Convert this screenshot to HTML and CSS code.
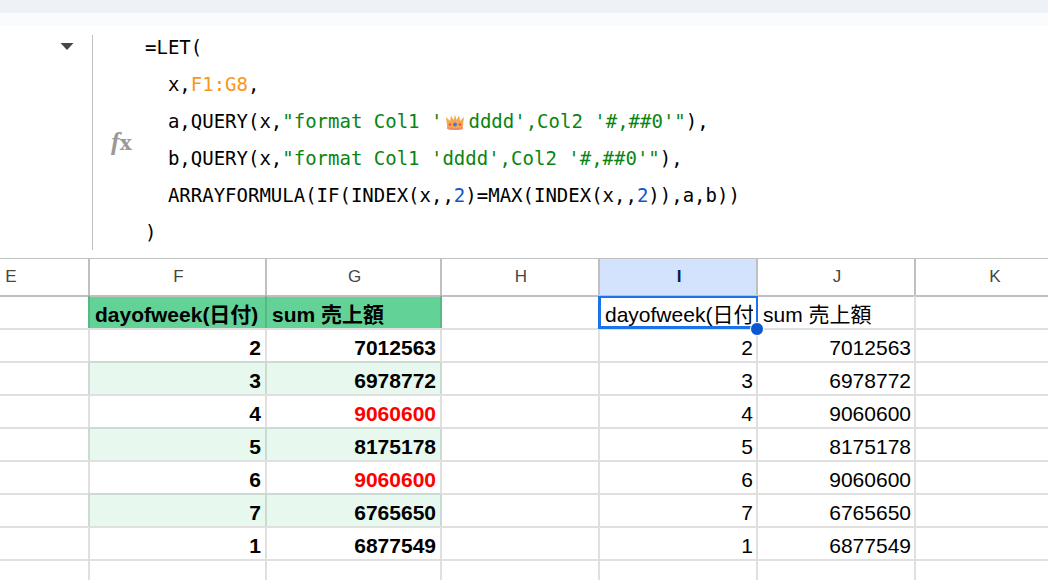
FILE: index.html
```
<!DOCTYPE html>
<html lang="ja">
<head>
  <meta charset="UTF-8">
  <meta name="viewport" content="width=device-width, initial-scale=1.0">
  <title>Spreadsheet</title>
  <link rel="stylesheet" href="styles.css">
</head>
<body>
  <div class="toolbar"></div>

  <div class="formula-bar">
    <div class="name-box">
      <button class="name-box-btn" type="button" aria-label="Name box">
        <svg width="14" height="7" viewBox="0 0 14 7"><path d="M0.500 0h13L7 7z" fill="#444746"/></svg>
      </button>
    </div>
    <div class="fx"><i>f</i>x</div>
    <pre class="formula">=LET(
  x,<span class="range">F1:G8</span>,
  a,QUERY(x,<span class="string">"format Col1 '<svg class="crown" width="20" height="18" viewBox="0 0 20 18">
<path d="M1 4L5 8 6 2.500 8.500 7 10 1.500 11.500 7 14 2.500 15 8 19 4 17.500 16Q10 18 2.500 16z" fill="#f5a850"/>
<path d="M3 8.500Q10 5.500 17 8.500L17.500 16Q10 18 2.500 16z" fill="#f5a850"/>
<path d="M2.200 14Q10 16 17.800 14L17.500 16Q10 18 2.500 16z" fill="#ef8a68"/>
<circle cx="10" cy="11.500" r="2" fill="#4a78d8"/>
<circle cx="5" cy="11.500" r="1.200" fill="#e0505a"/><circle cx="15" cy="11.500" r="1.200" fill="#e0505a"/>
</svg>dddd',Col2 '#,##0'"</span>),
  b,QUERY(x,<span class="string">"format Col1 'dddd',Col2 '#,##0'"</span>),
  ARRAYFORMULA(IF(INDEX(x,,<span class="number">2</span>)=MAX(INDEX(x,,<span class="number">2</span>)),a,b))
)</pre>
  </div>

  <div class="sheet">
    <table class="grid">
      <colgroup>
        <col class="col"><col class="col-f"><col class="col-g"><col class="col"><col class="col"><col class="col"><col>
      </colgroup>
      <thead>
        <tr><th>E</th><th>F</th><th>G</th><th>H</th><th class="active">I</th><th>J</th><th>K</th></tr>
      </thead>
      <tbody>
        <tr class="head">
          <td></td><td class="src">dayofweek(日付)</td><td class="src">sum 売上額</td><td class="edge"></td>
          <td class="selected"><div class="clip">dayofweek(日付)</div><span class="selection"></span><span class="handle"></span></td>
          <td>sum 売上額</td><td></td>
        </tr>
        <tr><td></td><td class="src">2</td><td class="src">7012563</td><td class="edge"></td><td>2</td><td>7012563</td><td></td></tr>
        <tr class="band"><td></td><td class="src">3</td><td class="src">6978772</td><td class="edge"></td><td>3</td><td>6978772</td><td></td></tr>
        <tr><td></td><td class="src">4</td><td class="src max">9060600</td><td class="edge"></td><td>4</td><td>9060600</td><td></td></tr>
        <tr class="band"><td></td><td class="src">5</td><td class="src">8175178</td><td class="edge"></td><td>5</td><td>8175178</td><td></td></tr>
        <tr><td></td><td class="src">6</td><td class="src max">9060600</td><td class="edge"></td><td>6</td><td>9060600</td><td></td></tr>
        <tr class="band"><td></td><td class="src">7</td><td class="src">6765650</td><td class="edge"></td><td>7</td><td>6765650</td><td></td></tr>
        <tr><td></td><td class="src">1</td><td class="src">6877549</td><td class="edge"></td><td>1</td><td>6877549</td><td></td></tr>
        <tr><td></td><td></td><td></td><td></td><td></td><td></td><td></td></tr>
      </tbody>
    </table>
  </div>
</body>
</html>
```

FILE: styles.css
```
* {
  margin: 0;
  padding: 0;
  box-sizing: border-box;
}

body {
  height: 100vh;
  overflow: hidden;
  background: #fff;
  color: #000;
  font-family: "Liberation Sans", "Noto Sans CJK JP", Arial, sans-serif;
}

.toolbar {
  height: 26px;
  background: #f9fbfd;
  border-top: 13px solid #eef2f8;
}

/* Formula bar */
.formula-bar {
  display: flex;
}

.name-box {
  display: flex;
  justify-content: flex-end;
  align-items: flex-start;
  width: 93px;
  margin: 9px 0 8px;
  padding: 8px 18px 0 0;
  border-right: 1px solid #c0c0c0;
}

.name-box-btn {
  display: flex;
  border: none;
  background: none;
  cursor: pointer;
}

.fx {
  align-self: center;
  width: 52px;
  padding-left: 18px;
  font-family: "DejaVu Serif", serif;
  font-size: 20px;
  font-weight: bold;
  line-height: 30px;
  color: #999;
}

.fx i {
  font-family: "Liberation Serif", serif;
  font-size: 26px;
}

.formula {
  flex: 1;
  padding: 3px 0 7px;
  font-family: "DejaVu Sans Mono", monospace;
  font-size: 19px;
  line-height: 37px;
}

.range {
  color: #f7981d;
}

.string {
  color: #0b8411;
}

.number {
  color: #1155cc;
}

.crown {
  margin: 0 3px;
  vertical-align: -3px;
}

/* Grid */
.sheet {
  overflow: hidden;
}

/* Scrolled part of the way into column E */
.grid {
  width: calc(100% + 94px);
  margin-left: -70px;
  table-layout: fixed;
  border-collapse: separate;
  border-spacing: 0;
}

.col {
  width: 158px;
}

.col-f {
  width: 177px;
}

.col-g {
  width: 175px;
}

.grid th {
  height: 37px;
  padding-left: 2px;
  border-top: 1px solid #c0c0c0;
  border-left: 2px solid #c0c0c0;
  font-size: 17px;
  font-weight: normal;
  color: #444746;
}

.grid th.active {
  background: #d3e3fd;
  color: #041e49;
  font-weight: bold;
}

.grid td {
  height: 33px;
  padding: 5px 3px 1px 5px;
  border-top: 2px solid rgba(0, 0, 0, 0.12);
  border-left: 2px solid rgba(0, 0, 0, 0.12);
  font-size: 21px;
  line-height: 25px;
  text-align: right;
  white-space: nowrap;
}

.grid .head td {
  border-top: 2px solid #c0c0c0;
  text-align: left;
}

.grid .src {
  padding-right: 4px;
  font-weight: bold;
}

.grid .max {
  color: #f00;
}

.head .src {
  background: #63d297;
}

.band .src {
  background: #e7f9ef;
}

.head .edge {
  border-left-color: #58b985;
}

.band .edge {
  border-left-color: #cbdbd2;
}

/* Selected cell */
.grid .selected {
  position: relative;
}

.clip {
  overflow: hidden;
}

.selection {
  position: absolute;
  inset: -1px -2px -1px -2px;
  border: solid #1a73e8;
  border-width: 2px 2px 3px 3px;
  z-index: 1;
}

.handle {
  position: absolute;
  right: -8px;
  bottom: -8px;
  width: 14px;
  height: 14px;
  border: 1px solid #fff;
  border-radius: 50%;
  background: #0b57d0;
  z-index: 2;
}
```
